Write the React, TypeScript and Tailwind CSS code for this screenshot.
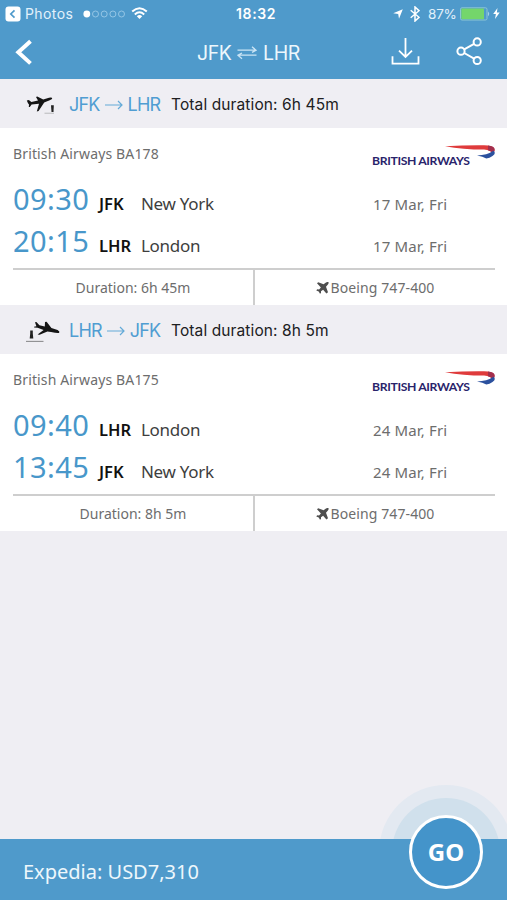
import React from "react";

type Stop = { time: string; code: string; city: string; date: string };
type Leg = {
  from: string;
  to: string;
  total: string;
  flight: string;
  stops: Stop[];
  duration: string;
  outbound: boolean;
};

const legs: Leg[] = [
  {
    from: "JFK",
    to: "LHR",
    total: "6h 45m",
    flight: "British Airways BA178",
    stops: [
      { time: "09:30", code: "JFK", city: "New York", date: "17 Mar, Fri" },
      { time: "20:15", code: "LHR", city: "London", date: "17 Mar, Fri" },
    ],
    duration: "6h 45m",
    outbound: true,
  },
  {
    from: "LHR",
    to: "JFK",
    total: "8h 5m",
    flight: "British Airways BA175",
    stops: [
      { time: "09:40", code: "LHR", city: "London", date: "24 Mar, Fri" },
      { time: "13:45", code: "JFK", city: "New York", date: "24 Mar, Fri" },
    ],
    duration: "8h 5m",
    outbound: false,
  },
];

function DepartIcon() {
  return (
    <svg className="block h-[26px] w-9" viewBox="0 0 36 26">
      <path
        d="M.8 9.4 2.8 9l2.6 2 6.6-1.4L10 6 11.2 5.6 17.2 8.4 23 6.8Q26.4 6.2 26.2 7.6q-.6 1.4-5 2.6l-3 1.2L12.6 20l-1.8.4 2.2-7.6L5.6 13.6 3.8 16l-1 .1.2-2.7-1-1.2z"
        fill="#151515"
      />
      <path d="M18.5 22.3h9.5" stroke="#c8c8cb" strokeWidth="1.4" />
      <path d="M25 14.2h2.8l-.3 6.8h-2z" fill="#222" />
    </svg>
  );
}

function ReturnIcon() {
  return (
    <svg className="block h-[26px] w-9" viewBox="0 0 36 26">
      <path
        d="M9 5.2 10.4 5 13.4 8.2 18.8 9.4 19 5 20.6 4.8 25.4 11 31.6 13Q34.2 14.4 33.2 15.8Q32 16.6 25 15L21.4 14.6 13.6 17.8 11.6 17.4 17.6 13 11.6 10.8 8.2 10.4 8 9.7 10.4 9.2Z"
        fill="#151515"
      />
      <path d="M4.2 13.6h2.6v3l.5 5H3.7l.5-5z" fill="#222" />
      <path d="M0 24.4h17.5" stroke="#8d8d8f" strokeWidth="1.1" />
    </svg>
  );
}

function AirlineLogo() {
  return (
    <div className="flex h-[24px] w-[123px] items-start">
      <span className="mt-[6px] w-[98px] whitespace-nowrap font-[Lato,sans-serif] text-[12.2px] font-bold leading-[20px] tracking-[-0.35px] text-[#29246b]">
        BRITISH AIRWAYS
      </span>
      <svg className="-ml-[25px] block h-[18px] w-[50px] shrink-0" viewBox="0 0 50 18">
        <path d="M0 1.2Q20 0 39 .2Q48 .2 49.4 3.8Q50 6 48.4 8.2Q46 5.6 39 4.6Q18 4.6 0 1.2Z" fill="#df3b3c" />
        <path d="M43 .6Q51 1.4 49.4 6L48 8.6Q46.5 6 43 5.2Z" fill="#a32f4d" />
        <path d="M32 10.4Q42 10.4 48.4 5.8Q51.6 8 47.5 11Q44.6 13 41.3 13.6Q38 11.2 32 10.4Z" fill="#2c519e" />
      </svg>
    </div>
  );
}

function AircraftIcon() {
  return (
    <svg className="mr-[2px] block h-[12px] w-[13px]" viewBox="0 0 13 12">
      <path
        d="M1 1.2 2.2.3 7.6 2.3 9.6.7Q11.8-.5 12.5.2Q13 1 11.7 2.7L10 4.8 12 10.3 10.4 11.6 7.1 7.8 5 9.3 5 11 4 11.7 2.7 9.5.3 8.4 1.2 7.3 3.1 7.4 4.9 5.6Z"
        fill="#4e4e4e"
      />
    </svg>
  );
}

function StatusBar() {
  return (
    <div className="flex h-[27px] items-center pl-[5px] pr-[5px] text-[#e2f1fb]">
      <div className="flex w-[231px] items-center">
        <svg className="block h-[16px] w-[16px]" viewBox="0 0 16 16">
          <rect x=".5" y=".5" width="15" height="15" rx="3" fill="white" />
          <path d="M9.5 4.3 5.8 8l3.7 3.7" fill="none" stroke="#4f9acb" strokeWidth="1.7" />
        </svg>
        <span className="ml-[4px] w-[58px] text-[14px] leading-5 tracking-[0.4px]">Photos</span>
        <svg className="block h-[10px] w-[43px]" viewBox="0 0 43 10">
          <circle cx="3.8" cy="5" r="3.4" fill="white" />
          {[12.5, 21.2, 29.9, 38.5].map((x) => (
            <circle key={x} cx={x} cy="5" r="3" fill="none" stroke="#9bcae8" strokeWidth=".9" />
          ))}
        </svg>
        <svg className="ml-[5px] block h-[13px] w-[17px]" viewBox="0 0 17 13" fill="none" stroke="white" strokeWidth="2">
          <path d="M1.2 4.6Q8.5-2 15.8 4.6M3.8 7.4Q8.5 3.2 13.2 7.4" />
          <path d="M5.8 9.2Q8.5 7 11.2 9.2L8.5 12Z" fill="white" stroke="none" />
        </svg>
      </div>
      <span className="w-[157px] text-[14px] font-semibold leading-5 tracking-[0.65px] text-white">18:32</span>
      <svg className="block h-[10px] w-[10px]" viewBox="0 0 10 10">
        <path d="M9.8.2 6 9.8 5.2 5 .2 4.3Z" fill="white" />
      </svg>
      <svg className="ml-[7px] block h-[16px] w-[10px]" viewBox="0 0 10 16">
        <path d="M.7 4.2 9 11.3 5 15V1l4 3.7L.7 11.8" fill="none" stroke="white" strokeWidth="1.5" />
      </svg>
      <span className="ml-[8px] w-[32px] whitespace-nowrap text-[13.5px] leading-5 tracking-[-0.2px]">87%</span>
      <svg className="block h-[14px] w-[31px] shrink-0" viewBox="0 0 31 14">
        <rect x=".5" y=".8" width="26.5" height="12.2" rx="1.5" fill="none" stroke="#8dc5d6" />
        <rect x="1.3" y="1.6" width="22.7" height="10.6" rx=".8" fill="#74d66b" />
        <path d="M28.2 4.6q2 2.3 0 4.6z" fill="#b8ddf0" />
      </svg>
      <svg className="ml-[2px] block h-[11px] w-[7px] shrink-0" viewBox="0 0 7 11">
        <path d="M4.5 0 .2 6h2.7L2 11l4.7-6.4H3.9z" fill="white" />
      </svg>
    </div>
  );
}

function Header() {
  return (
    <header className="h-[79px] bg-[#4f9acb] font-[Inter,sans-serif]">
      <StatusBar />
      <div className="flex h-[52px] items-center">
        <svg className="ml-[15px] block h-[28px] w-[19px]" viewBox="0 0 19 28">
          <path d="M15.5 2.2 3.3 13.2l12.2 11.2" fill="none" stroke="white" strokeWidth="4" />
        </svg>
        <div className="ml-[163px] flex w-[194px] items-center whitespace-nowrap text-[19.5px] leading-6 text-[#edf7fc]">
          <span className="w-[40px] tracking-[-0.5px]">JFK</span>
          <svg className="block h-[14px] w-[20px]" viewBox="0 0 20 14" fill="none" stroke="#cbe5f5" strokeWidth="1.3">
            <path d="M.5 4.2h18.2M15 .8l4 3.4-4 2.2M19.5 9.2H1.3M5 7 1 9.2l4 3.6" />
          </svg>
          <span className="ml-[6px] tracking-[-0.4px]">LHR</span>
        </div>
        <svg className="block h-[32px] w-[29px]" viewBox="0 0 29 32" fill="none" stroke="white" strokeWidth="1.8">
          <path d="M14.5 1v18.5M8 13.7l6.5 6.2 6.5-6.2M1.5 19.2v7.4h26v-7.4" />
        </svg>
        <svg className="ml-[36px] block h-[32px] w-[27px]" viewBox="0 0 27 32" fill="none" stroke="white" strokeWidth="2">
          <circle cx="5" cy="14.2" r="3.6" />
          <circle cx="21.2" cy="4.9" r="3.6" />
          <circle cx="21.2" cy="23.5" r="3.6" />
          <path d="m8.2 12.4 9.9-5.6M8.2 16l9.9 5.6" />
        </svg>
      </div>
    </header>
  );
}

function LegSection({ leg }: { leg: Leg }) {
  return (
    <section>
      <div className="flex h-[49px] items-center pl-[26px] pt-px font-[Inter,sans-serif]">
        {leg.outbound ? <DepartIcon /> : <ReturnIcon />}
        <div className="ml-[7px] flex w-[102px] items-center pt-px text-[18px] leading-6 tracking-[-0.8px] text-[#509dd2]">
          <span>{leg.from}</span>
          <svg className="mx-[5px] block h-[10px] w-[18px]" viewBox="0 0 18 10" fill="none" stroke="#64aad8" strokeWidth="1.2">
            <path d="M0 5h17M13 1l4 4-4 4" />
          </svg>
          <span>{leg.to}</span>
        </div>
        <span className="whitespace-nowrap pt-px text-[15.5px] leading-6 tracking-[0.11px] text-[#202022]">
          Total duration: {leg.total}
        </span>
      </div>
      <div className="h-[177px] bg-white pl-[13px] pr-[12px] text-[#6d6d6d]">
        <div className="flex h-[52px] items-start justify-between">
          <span className="mt-[15px] text-[14px] leading-[22px] tracking-[0.14px]">{leg.flight}</span>
          <div className="mt-[17px]">
            <AirlineLogo />
          </div>
        </div>
        {leg.stops.map((stop) => (
          <div key={stop.code} className="flex h-[41.5px] items-center">
            <span className="-mt-[3px] w-[86px] text-[29px] leading-[38px] tracking-[0.4px] text-[#4897ca]">{stop.time}</span>
            <span className="mt-[7px] w-[42px] text-[16.5px] font-semibold leading-6 text-[#111]">{stop.code}</span>
            <span className="mt-[7px] w-[232px] text-[17px] leading-6 tracking-[-0.3px] text-[#3e3e3e]">{stop.city}</span>
            <span className="mt-[7px] text-[15px] leading-6 tracking-[0.15px]">{stop.date}</span>
          </div>
        ))}
        <div className="mt-[5px] flex h-[37px] border-t-2 border-[#cecece] text-[14px]">
          <div className="flex w-[242px] items-center justify-center border-r-2 border-[#cecece]">
            Duration: {leg.duration}
          </div>
          <div className="flex flex-1 items-center justify-center tracking-[0.1px]">
            <AircraftIcon />
            Boeing 747-400
          </div>
        </div>
      </div>
    </section>
  );
}

export default function App() {
  return (
    <div className="relative flex h-[900px] w-[507px] flex-col overflow-hidden bg-[#efeef3] font-['Noto_Sans',sans-serif]">
      <Header />
      {legs.map((leg) => (
        <LegSection key={leg.flight} leg={leg} />
      ))}
      <div className="absolute left-[379px] top-[785px] h-[134px] w-[134px] rounded-full bg-[#e3e9f1]" />
      <div className="absolute left-[392px] top-[798px] h-[108px] w-[108px] rounded-full bg-[#d0e0ec]" />
      <footer className="relative mt-auto flex h-[61px] items-center bg-[#4f9acb] pl-[23px] pt-[4px] text-[20px] text-[#edf7fc]">
        Expedia: USD7,310
      </footer>
      <button className="absolute left-[409px] top-[815px] flex h-[74px] w-[74px] items-center justify-center rounded-full border-[3px] border-white bg-[#4494ca] text-[24px] font-bold text-white">
        GO
      </button>
    </div>
  );
}
